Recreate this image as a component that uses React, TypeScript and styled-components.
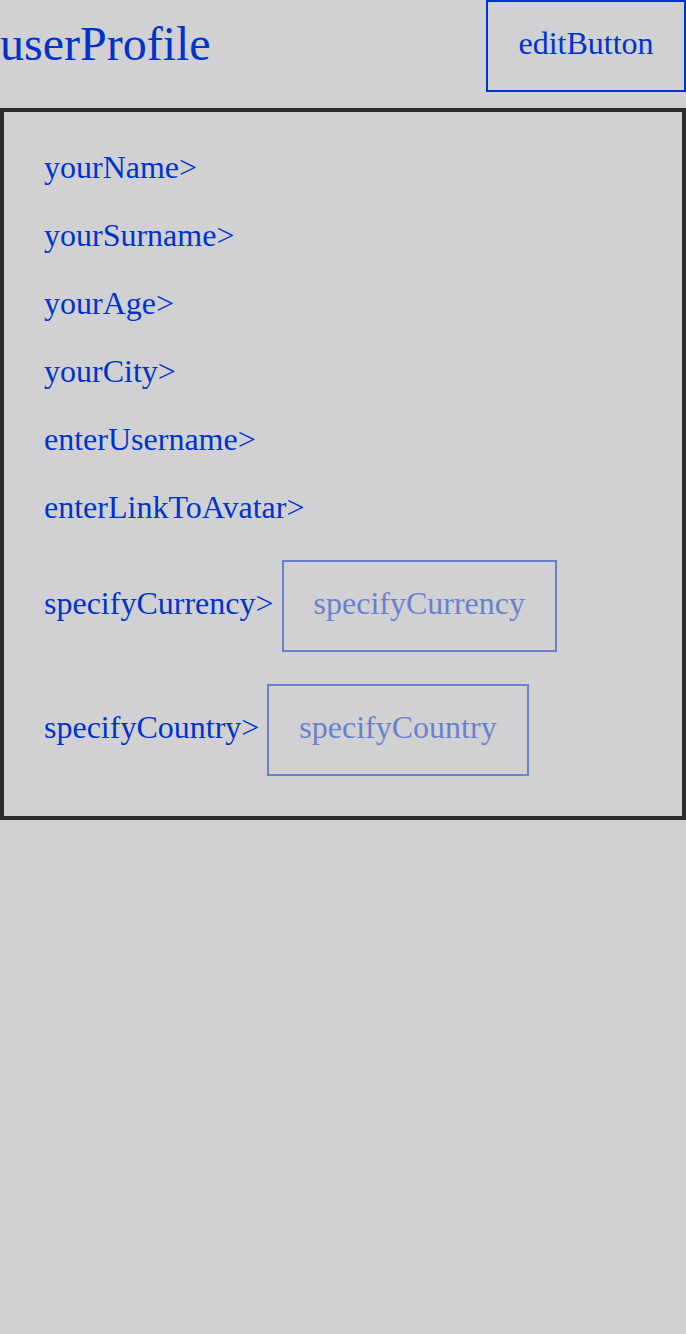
import styled, { createGlobalStyle } from 'styled-components';

const GlobalStyle = createGlobalStyle`
  html, body {
    margin: 0;
    padding: 0;
    background-color: #d1d1d3;
  }
  body {
    font-family: "Liberation Serif", "Times New Roman", serif;
    color: #0033cc;
    min-height: 1334px;
  }
`;

const fields = [
  'yourName>',
  'yourSurname>',
  'yourAge>',
  'yourCity>',
  'enterUsername>',
  'enterLinkToAvatar>',
];

const selects = [
  { label: 'specifyCurrency>', placeholder: 'specifyCurrency' },
  { label: 'specifyCountry>', placeholder: 'specifyCountry' },
];

const App = () => {
  return (
    <>
      <GlobalStyle />
      <Header>
        <Title>userProfile</Title>
        <EditButton>editButton</EditButton>
      </Header>
      <Panel>
        {fields.map((f) => (
          <FieldLabel key={f}>{f}</FieldLabel>
        ))}
        <SelectGroup>
          {selects.map((s) => (
            <SelectRow key={s.label}>
              <FieldLabel>{s.label}</FieldLabel>
              <SelectBox>{s.placeholder}</SelectBox>
            </SelectRow>
          ))}
        </SelectGroup>
      </Panel>
    </>
  );
};

const Header = styled.header`
  display: flex;
  justify-content: space-between;
  align-items: center;
  height: 92px;
  margin-bottom: 16px;
`;

const Title = styled.h1`
  margin: 0;
  font-size: 48px;
  font-weight: normal;
  line-height: 1;
  padding-bottom: 4px;
`;

const EditButton = styled.button`
  box-sizing: border-box;
  width: 200px;
  height: 92px;
  background: transparent;
  border: 2px solid #0033cc;
  color: #0033cc;
  font-family: "Liberation Serif", "Times New Roman", serif;
  font-size: 32px;
  padding: 0 0 6px;
  cursor: pointer;
`;

const Panel = styled.main`
  box-sizing: border-box;
  border: 4px solid #2b2b29;
  padding: 37px 40px 40px;
  display: flex;
  flex-direction: column;
  gap: 32px;
`;

const FieldLabel = styled.span`
  font-size: 32px;
  line-height: 36px;
  white-space: nowrap;
`;

const SelectGroup = styled.div`
  display: flex;
  flex-direction: column;
  gap: 32px;
  margin-top: 3px;
`;

const SelectRow = styled.div`
  display: flex;
  align-items: baseline;
  gap: 9px;
`;

const SelectBox = styled.div`
  box-sizing: border-box;
  height: 92px;
  display: flex;
  align-items: center;
  padding: 0 30px 6px 30px;
  margin-left: -1px;
  border: 2px solid #0033cc;
  font-size: 32px;
  opacity: 0.5;
`;

export default App;
